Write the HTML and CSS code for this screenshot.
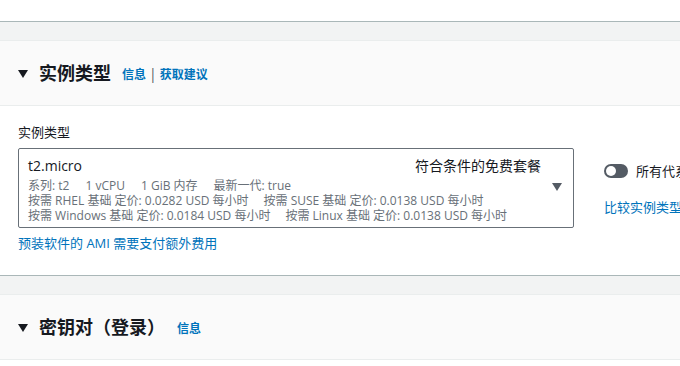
FILE: index.html
```html
<html>
	<head>
		<title>启动实例</title>
		<meta charset="UTF-8">
		<link rel="stylesheet" href="styles.css">
	</head>
	<body>
		<div class="top-gap"></div>

		<div class="section">
			<div class="band"></div>
			<div class="header">
				<span class="caret"></span>
				<h2>实例类型</h2>
				<span class="links"><a href="#">信息</a><span class="sep">|</span><a href="#">获取建议</a></span>
			</div>
			<div class="content">
				<div class="label">实例类型</div>
				<div class="row">
					<div class="select">
						<div class="select-top">
							<span class="name">t2.micro</span>
							<span class="tag">符合条件的免费套餐</span>
						</div>
						<div class="detail">
							<span>系列: t2</span><span>1 vCPU</span><span>1 GiB 内存</span><span>最新一代: true</span>
						</div>
						<div class="detail price">
							<span>按需 RHEL 基础 定价: 0.0282 USD 每小时</span><span>按需 SUSE 基础 定价: 0.0138 USD 每小时</span>
						</div>
						<div class="detail price">
							<span>按需 Windows 基础 定价: 0.0184 USD 每小时</span><span>按需 Linux 基础 定价: 0.0138 USD 每小时</span>
						</div>
						<span class="arrow"></span>
					</div>
					<div class="side">
						<div class="toggle-row">
							<span class="toggle"><span class="knob"></span></span>
							<span class="toggle-text">所有代系</span>
						</div>
						<a class="side-link" href="#">比较实例类型</a>
					</div>
				</div>
				<a class="note" href="#">预装软件的 AMI 需要支付额外费用</a>
			</div>
		</div>

		<div class="section">
			<div class="band"></div>
			<div class="header">
				<span class="caret"></span>
				<h2>密钥对（登录）</h2>
				<span class="links wide"><a href="#">信息</a></span>
			</div>
		</div>
	</body>
</html>
```

FILE: styles.css
```css
html, body {
	margin: 0;
	padding: 0;
	width: 680px;
	height: 366px;
	overflow: hidden;
	background: #fff;
}

* {
	font-family: "Open Sans", "Noto Sans CJK SC", sans-serif;
	color: #16191f;
	box-sizing: border-box;
}

a {
	color: #0073bb;
	text-decoration: none;
}

.top-gap { height: 21px; }

.section {
	border-top: 1px solid #aab7b8;
	width: 680px;
}

.band {
	height: 19px;
	background: #f2f3f3;
	border-bottom: 1px solid #eaeded;
}

.header {
	height: 65px;
	background: #fafafa;
	border-bottom: 1px solid #eaeded;
	display: flex;
	align-items: center;
	padding: 0 0 0 18px;
}

.caret {
	width: 0;
	height: 0;
	border-left: 5px solid transparent;
	border-right: 5px solid transparent;
	border-top: 8px solid #16191f;
	margin-right: 11px;
	margin-top: 1px;
}

h2 {
	margin: 0;
	font-size: 18px;
	font-weight: bold;
	line-height: 22px;
}

.links {
	margin-left: 11px;
	font-size: 12px;
	font-weight: bold;
	margin-top: 1px;
}

.links.wide { margin-left: 12px; }

.links a { font-weight: bold; }

.sep {
	margin: 0 3px;
	color: #545b64;
	font-weight: normal;
	font-size: 14px;
}

.content {
	padding: 18px 18px 0 18px;
	height: 169px;
}

.label {
	font-size: 13px;
	line-height: 17px;
	margin-bottom: 7px;
}

.row {
	display: flex;
	gap: 30px;
	width: 760px;
}

.select {
	position: relative;
	width: 556px;
	height: 80px;
	border: 1px solid #687078;
	border-radius: 2px;
	padding: 8px 9px 0 9px;
}

.select-top {
	display: flex;
	justify-content: space-between;
	width: 513px;
	font-size: 14px;
	line-height: 17px;
	margin-bottom: 4px;
}

.name { font-size: 14px; }

.detail {
	font-size: 12px;
	line-height: 15px;
	color: #687078;
	white-space: nowrap;
}

.detail span {
	color: #687078;
	margin-right: 16px;
}

.detail.price span { margin-right: 15px; }

.arrow {
	position: absolute;
	right: 11px;
	top: 34px;
	width: 0;
	height: 0;
	border-left: 5px solid transparent;
	border-right: 5px solid transparent;
	border-top: 8px solid #545b64;
}

.side {
	padding-top: 13px;
	display: flex;
	flex-direction: column;
	gap: 17px;
}

.toggle-row {
	display: flex;
	align-items: center;
	gap: 8px;
	font-size: 13px;
	white-space: nowrap;
}

.toggle {
	display: inline-flex;
	align-items: center;
	width: 24px;
	height: 14px;
	border-radius: 7px;
	background: #545b64;
	padding: 0 2px;
}

.knob {
	width: 10px;
	height: 10px;
	border-radius: 50%;
	background: #fff;
}

.side-link {
	font-size: 13px;
	white-space: nowrap;
}

.note {
	display: block;
	margin-top: 7px;
	font-size: 13px;
	line-height: 17px;
}
```
